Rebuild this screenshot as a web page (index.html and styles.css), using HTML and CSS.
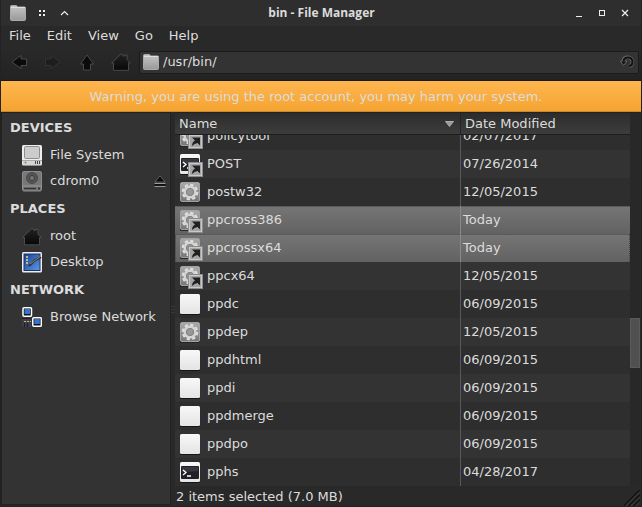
FILE: index.html
```html
<!DOCTYPE html>
<html lang="en">
<head>
<meta charset="utf-8">
<title>bin - File Manager</title>
<link rel="stylesheet" href="styles.css">
</head>
<body>
<svg class="defs" aria-hidden="true">
  <defs>
    <linearGradient id="gGrey" x2="0" y2="1"><stop stop-color="#aaa"/><stop offset="1" stop-color="#777"/></linearGradient>
    <linearGradient id="gLight" x2="0" y2="1"><stop stop-color="#c6c6c6"/><stop offset="1" stop-color="#999"/></linearGradient>
    <linearGradient id="gWhite" x2="0" y2="1"><stop stop-color="#f8f8f8"/><stop offset="1" stop-color="#e4e4e4"/></linearGradient>
    <linearGradient id="gBlue" x2="1" y2="1"><stop stop-color="#17418e"/><stop offset="1" stop-color="#5b9ae8"/></linearGradient>
    <linearGradient id="gDark" x2="0" y2="1"><stop stop-color="#222"/><stop offset="1" stop-color="#080808"/></linearGradient>
  </defs>
  <symbol id="folder" viewBox="0 0 16 16"><path d="M0.5 2V1.500Q.5.5 1.500.5H6.500L7.500 2H14.500Q15.500 2 15.500 3V14.500Q15.500 15.500 14.500 15.500H1.500Q.5 15.500.5 14.500Z" fill="url(#gLight)" stroke="#aaa"/><path d="M1 2.500H15" stroke="#dedede"/></symbol>
  <symbol id="page" viewBox="0 0 21 22"><rect y="1" width="20" height="20" rx="1.500" fill="#161616"/><rect width="20" height="20" rx="1.500" fill="url(#gWhite)"/></symbol>
  <symbol id="gear" viewBox="0 0 24 24"><rect y="1" width="20" height="20" rx="1.500" fill="#252525"/><rect x=".5" y=".5" width="19" height="19" rx="1.500" fill="url(#gGrey)" stroke="#a2a2a2"/><circle cx="10" cy="10" r="7" fill="none" stroke="#dedede" stroke-width="2.600" stroke-dasharray="3.200 2.300"/><circle cx="10" cy="10" r="5.200" fill="none" stroke="#d4d4d4" stroke-width="2.800"/><circle cx="10" cy="10" r="3.600" fill="#989898" stroke="#828282"/></symbol>
  <symbol id="term" viewBox="0 0 24 24"><rect y="1" width="20" height="20" rx="1.500" fill="#161616"/><rect width="20" height="20" rx="1.500" fill="url(#gWhite)"/><rect x="1" y="4" width="18" height="13" rx="1" fill="#222027"/><path d="M2 5H18V9Q10 10 2 10Z" fill="#39373e"/><path d="M3 8L6 10.500L3 13M7 14H11" fill="none" stroke="#fff" stroke-width="1.300"/></symbol>
  <symbol id="link" viewBox="0 0 16 16"><rect x=".5" y=".5" width="14" height="14" fill="#aaa" stroke="#8b8b8b"/><rect x="1.500" y="1.500" width="12" height="12" fill="#a4a4a4" stroke="#c9c9c9"/><path d="M4 3.500H12V11.500L9.500 9Q6.500 9.500 4 12Q4 8 7 6.500Z" fill="#202020"/></symbol>
  <symbol id="house" viewBox="0 0 20 18"><path d="M10 .7L13 3.500V2H16V6.500L19.300 10H17.500V17.300H2.500V10H.7Z" fill="url(#gDark)" stroke="#555" stroke-width=".8"/></symbol>
  <symbol id="drive" viewBox="0 0 20 21"><rect width="20" height="20.500" rx="1.500" fill="#eee"/><path d="M.5 15H19.500V20H.5Z" fill="#d5d5d5"/><rect x="2.500" y="1.500" width="15" height="12" rx="1" fill="#ccc" stroke="#8e8e8e"/><path d="M0 15.500H20" stroke="#aaa"/><path d="M13.500 16V19M15.500 16V19M17.500 16V19" stroke="#444"/><circle cx="3.500" cy="17.500" r="1" fill="#59a34b"/></symbol>
  <symbol id="disc" viewBox="0 0 20 21"><rect x=".5" y=".5" width="19" height="19.500" rx="1.500" fill="#777" stroke="#8c8c8c"/><circle cx="10" cy="7" r="5.500" fill="#555" stroke="#4a4a4a"/><circle cx="10" cy="7" r="2.500" fill="#777" stroke="#3d3d3d"/><path d="M0 15H20" stroke="#999"/><path d="M2 17.500H14" stroke="#333" stroke-width="1.500"/><path d="M16 17.500H18" stroke="#333" stroke-width="2"/></symbol>
  <symbol id="desk" viewBox="0 0 20 21"><rect width="20" height="20.500" rx="1.500" fill="#eee"/><rect x="2" y="2" width="16" height="16.500" fill="url(#gBlue)" stroke="#193566"/><path d="M4 5H6M4 8H6M4 11H6" stroke="#ecd9a0" stroke-width="1.600"/><path d="M7 14L12 9L19 5" stroke="#333" stroke-width="2.400" fill="none"/><path d="M8 12L19 4" stroke="#aaa" stroke-width=".7"/></symbol>
  <symbol id="net" viewBox="0 0 20 21"><rect x="1" y=".8" width="8.500" height="8.500" rx="1" fill="#111" stroke="#fff" stroke-width="1.500"/><rect x="2.500" y="2" width="5.500" height="5" fill="#3575cf"/><rect x="10.800" y="10.800" width="8.500" height="8.500" rx="1" fill="#111" stroke="#fff" stroke-width="1.500"/><rect x="12.300" y="12" width="5.500" height="5" fill="#3575cf"/><path d="M0 10.500H9V20H0Z" fill="#42384d"/><path d="M0 11.500H9" stroke="#222"/><path d="M2 14.500H9" stroke="#9fd52c" stroke-dasharray="2 1"/><path d="M2.500 16V20M5.500 16V20" stroke="#211b27"/></symbol>
</svg>
<div class="window">
  <header class="titlebar">
    <svg class="i16"><use href="#folder"/></svg>
    <button class="tbtn" aria-label="Stick"><svg width="8" height="8"><path d="M1 0v2M1 4v2M5 0v2M5 4v2" transform="translate(1 1)" stroke="#eee" stroke-width="2"/></svg></button>
    <button class="tbtn shade" aria-label="Shade"><svg width="9" height="6"><path d="M1 5L4.500 1.500L8 5" fill="none" stroke="#eee" stroke-width="1.200"/></svg></button>
    <h1>bin - File Manager</h1>
    <button class="tbtn" aria-label="Minimize"><svg width="8" height="8"><path d="M1 7.500H7" stroke="#eee"/></svg></button>
    <button class="tbtn" aria-label="Maximize"><svg width="8" height="8"><rect x="1.500" y="1.500" width="5" height="5" fill="none" stroke="#eee"/></svg></button>
    <button class="tbtn" aria-label="Close"><svg width="8" height="8"><path d="M1 1L7 7M7 1L1 7" stroke="#eee" stroke-width="1.200"/></svg></button>
  </header>
  <nav class="menubar">
    <button>File</button><button>Edit</button><button>View</button><button>Go</button><button>Help</button>
  </nav>
  <div class="toolbar">
    <button aria-label="Back"><svg width="16" height="14"><path d="M1 7L10 .5V4H15.500V10.500H10V13.500Z" fill="#0b0b0b" stroke="#555" stroke-width=".8"/></svg></button>
    <button aria-label="Forward" disabled><svg width="16" height="14"><path d="M15 7L6 .5V4H.5V10.500H6V13.500Z" fill="#1d1d1d" stroke="#383838" stroke-width=".8"/></svg></button>
    <button aria-label="Up"><svg width="14" height="17"><path d="M7 1L13.500 10H10.500V16H3.500V10H.5Z" fill="#0b0b0b" stroke="#555" stroke-width=".8"/></svg></button>
    <button aria-label="Home"><svg width="20" height="18"><use href="#house"/></svg></button>
    <div class="location">
      <svg class="i16"><use href="#folder"/></svg>
      <input type="text" aria-label="Location" value="/usr/bin/">
      <button aria-label="Reload"><svg width="14" height="14"><path d="M3 6A4.700 4.700 0 1 1 9 11.500" fill="none" stroke="#666" stroke-width="3.400"/><path d="M.5 6H7L3.500 10.500Z" fill="#111" stroke="#777" stroke-width=".8"/><path d="M3.500 6.500A4.500 4.500 0 1 1 9 11.300" fill="none" stroke="#111" stroke-width="2"/></svg></button>
    </div>
  </div>
  <p class="warning">Warning, you are using the root account, you may harm your system.</p>
  <main class="panes">
    <aside class="sidebar">
      <h2>DEVICES</h2>
      <ul>
        <li><a href="#"><svg class="side"><use href="#drive"/></svg>File System</a></li>
        <li><a href="#"><svg class="side"><use href="#disc"/></svg>cdrom0</a><button class="eject" aria-label="Eject cdrom0"><svg width="12" height="13"><path d="M6 .8L11 7H1Z" fill="#0b0b0b" stroke="#777" stroke-width=".7"/><path d="M.5 8.500H11.500M.5 11.500H11.500" stroke="#999"/><path d="M.5 10H11.500" stroke="#111" stroke-width="2"/></svg></button></li>
      </ul>
      <h2>PLACES</h2>
      <ul>
        <li><a href="#"><svg class="side"><use href="#house"/></svg>root</a></li>
        <li><a href="#"><svg class="side"><use href="#desk"/></svg>Desktop</a></li>
      </ul>
      <h2>NETWORK</h2>
      <ul>
        <li><a href="#"><svg class="side"><use href="#net"/></svg>Browse Network</a></li>
      </ul>
    </aside>
    <div class="grip"></div>
    <section class="content">
      <div class="listing">
        <table>
          <thead><tr><th>Name<svg width="9" height="6"><path d="M.5.5H8.500L4.500 5.500Z" fill="#999" stroke="#ccc" stroke-width=".7"/></svg></th><th>Date Modified</th></tr></thead>
          <tbody>
            <tr><td><svg class="file"><use href="#gear" width="24" height="24"/><use href="#link" x="8" y="8" width="16" height="16"/></svg>policytool</td><td>02/07/2017</td></tr>
            <tr><td><svg class="file"><use href="#term" width="24" height="24"/><use href="#link" x="8" y="8" width="16" height="16"/></svg>POST</td><td>07/26/2014</td></tr>
            <tr><td><svg class="file"><use href="#gear" width="24" height="24"/></svg>postw32</td><td>12/05/2015</td></tr>
            <tr class="selected"><td><svg class="file"><use href="#gear" width="24" height="24"/><use href="#link" x="8" y="8" width="16" height="16"/></svg>ppcross386</td><td>Today</td></tr>
            <tr class="selected focus"><td><svg class="file"><use href="#gear" width="24" height="24"/><use href="#link" x="8" y="8" width="16" height="16"/></svg>ppcrossx64</td><td>Today</td></tr>
            <tr><td><svg class="file"><use href="#gear" width="24" height="24"/><use href="#link" x="8" y="8" width="16" height="16"/></svg>ppcx64</td><td>12/05/2015</td></tr>
            <tr><td><svg class="file"><use href="#page" width="21" height="22"/></svg>ppdc</td><td>06/09/2015</td></tr>
            <tr><td><svg class="file"><use href="#gear" width="24" height="24"/></svg>ppdep</td><td>12/05/2015</td></tr>
            <tr><td><svg class="file"><use href="#page" width="21" height="22"/></svg>ppdhtml</td><td>06/09/2015</td></tr>
            <tr><td><svg class="file"><use href="#page" width="21" height="22"/></svg>ppdi</td><td>06/09/2015</td></tr>
            <tr><td><svg class="file"><use href="#page" width="21" height="22"/></svg>ppdmerge</td><td>06/09/2015</td></tr>
            <tr><td><svg class="file"><use href="#page" width="21" height="22"/></svg>ppdpo</td><td>06/09/2015</td></tr>
            <tr><td><svg class="file"><use href="#term" width="24" height="24"/></svg>pphs</td><td>04/28/2017</td></tr>
          </tbody>
        </table>
        <div class="scrollbar"><div class="thumb"></div></div>
      </div>
      <footer class="status"><span>2 items selected (7.0 MB)</span><svg width="16" height="16"><path d="M0 16L16 0M5 16L16 5M10 16L16 10" stroke="#0e0e0e" stroke-width="1.500"/><path d="M1.500 16L16 1.500M6.500 16L16 6.500M11.500 16L16 11.500" stroke="#505050" stroke-width=".8"/></svg></footer>
    </section>
  </main>
</div>
</body>
</html>
```
FILE: styles.css
```css
* { box-sizing: border-box; }
body {
  margin: 0;
  background: #292929;
  color: #dcdcdc;
  font: 13px/16px "DejaVu Sans", sans-serif;
}
button {
  display: flex;
  align-items: center;
  justify-content: center;
  padding: 0;
  border: 0;
  background: none;
  color: inherit;
  font: inherit;
}
svg { display: block; flex: none; }
h1, h2, p, ul { margin: 0; padding: 0; }
a { color: inherit; text-decoration: none; }
.defs { position: absolute; width: 0; height: 0; }
.i16 { width: 16px; height: 16px; }
.window {
  display: flex;
  flex-direction: column;
  height: 100vh;
  border: 1px solid #222;
  border-top: 0;
}
.titlebar {
  display: flex;
  align-items: center;
  height: 26px;
  padding: 0 5px 0 9px;
  background: #2e2e2e;
}
.titlebar h1 {
  flex: 1;
  text-align: center;
  font: bold 12px/16px "Open Sans", sans-serif;
}
.tbtn { width: 23px; height: 20px; }
.tbtn:first-of-type { margin-left: 4px; }
.menubar {
  display: flex;
  gap: 16px;
  height: 22px;
  padding: 0 8px;
  background: #292929;
}
.menubar button { height: 19px; }
.toolbar {
  display: flex;
  align-items: center;
  height: 33px;
  padding: 0 2px 4px 1px;
  background: linear-gradient(#292929, #232323);
  border-bottom: 1px solid #1a1a1a;
}
.toolbar > button { width: 34px; height: 24px; }
.location {
  display: flex;
  flex: 1;
  align-items: center;
  gap: 4px;
  height: 23px;
  margin-left: 1px;
  padding: 0 4px 0 3px;
  border: 1px solid #1b1b1b;
  border-radius: 2px;
  background: #333;
}
.location input {
  flex: 1;
  min-width: 0;
  padding: 0;
  border: 0;
  outline: 0;
  background: none;
  color: inherit;
  font: inherit;
}
.warning {
  height: 31px;
  padding: 0 10px 0 0;
  background: linear-gradient(#ffb650, #f5a431);
  border-bottom: 1px solid #c98a2c;
  color: #dcdcdc;
  text-align: center;
  line-height: 31px;
}
.panes {
  display: flex;
  flex: 1;
  min-height: 0;
  padding-right: 1px;
}
.sidebar {
  width: 170px;
  margin-bottom: 1px;
  border: 1px solid #222;
  background: #333;
}
.sidebar h2 {
  padding-left: 8px;
  font-size: 13px;
  line-height: 29px;
}
.sidebar li {
  display: flex;
  align-items: center;
  justify-content: space-between;
  height: 26px;
  padding: 0 4px 0 20px;
}
.sidebar a {
  display: flex;
  align-items: center;
  gap: 8px;
}
.side { width: 20px; height: 21px; }
.grip {
  width: 4px;
  background: linear-gradient(#181818 50%, #393939 50%) center / 4px 3px repeat-y content-box;
  padding: 193px 0;
}
.content {
  display: flex;
  flex: 1;
  flex-direction: column;
  min-width: 0;
}
.listing {
  display: flex;
  flex: 1;
  min-height: 0;
  border-top: 1px solid #222;
}
table {
  display: flex;
  flex: 1;
  flex-direction: column;
  min-width: 0;
}
tr {
  display: grid;
  grid-template-columns: 1fr 170px;
}
thead tr {
  height: 22px;
  background: linear-gradient(#2c2c2c, #3d3d3d);
  border-bottom: 1px solid #1d1d1d;
}
th {
  display: flex;
  align-items: center;
  justify-content: space-between;
  padding: 0 6px 0 4px;
  font-weight: normal;
}
th + th { border-left: 1px solid #252525; }
tbody {
  display: flex;
  flex: 1;
  flex-direction: column;
  justify-content: flex-end;
  min-height: 0;
  overflow: hidden;
}
tbody tr {
  flex: none;
  height: 28px;
  background: #333;
}
tbody tr:nth-child(odd) { background: #2e2e2e; }
tbody tr.selected {
  background: linear-gradient(#5a5a5a 1px, #757575 1px, #626262);
}
td {
  display: flex;
  align-items: center;
  gap: 3px;
  padding: 0 0 0 5px;
}
td + td {
  padding-left: 2px;
  border-left: 1px solid #595959;
}
.selected td + td { border-color: #898989; }
.focus td:last-child { border-right: 1px dotted #444; }
.focus td:first-child { box-shadow: inset 1px 0 #555; }
.file { width: 24px; height: 24px; margin-top: 4px; }
.scrollbar {
  width: 10px;
  padding-top: 205px;
  background: #282828;
}
.thumb {
  height: 50px;
  border: 1px solid #5b5b5b;
  background: #505050;
}
.status {
  display: flex;
  align-items: center;
  justify-content: space-between;
  height: 20px;
  padding: 1px 0 0 1px;
}
.status svg { align-self: flex-end; }
```
